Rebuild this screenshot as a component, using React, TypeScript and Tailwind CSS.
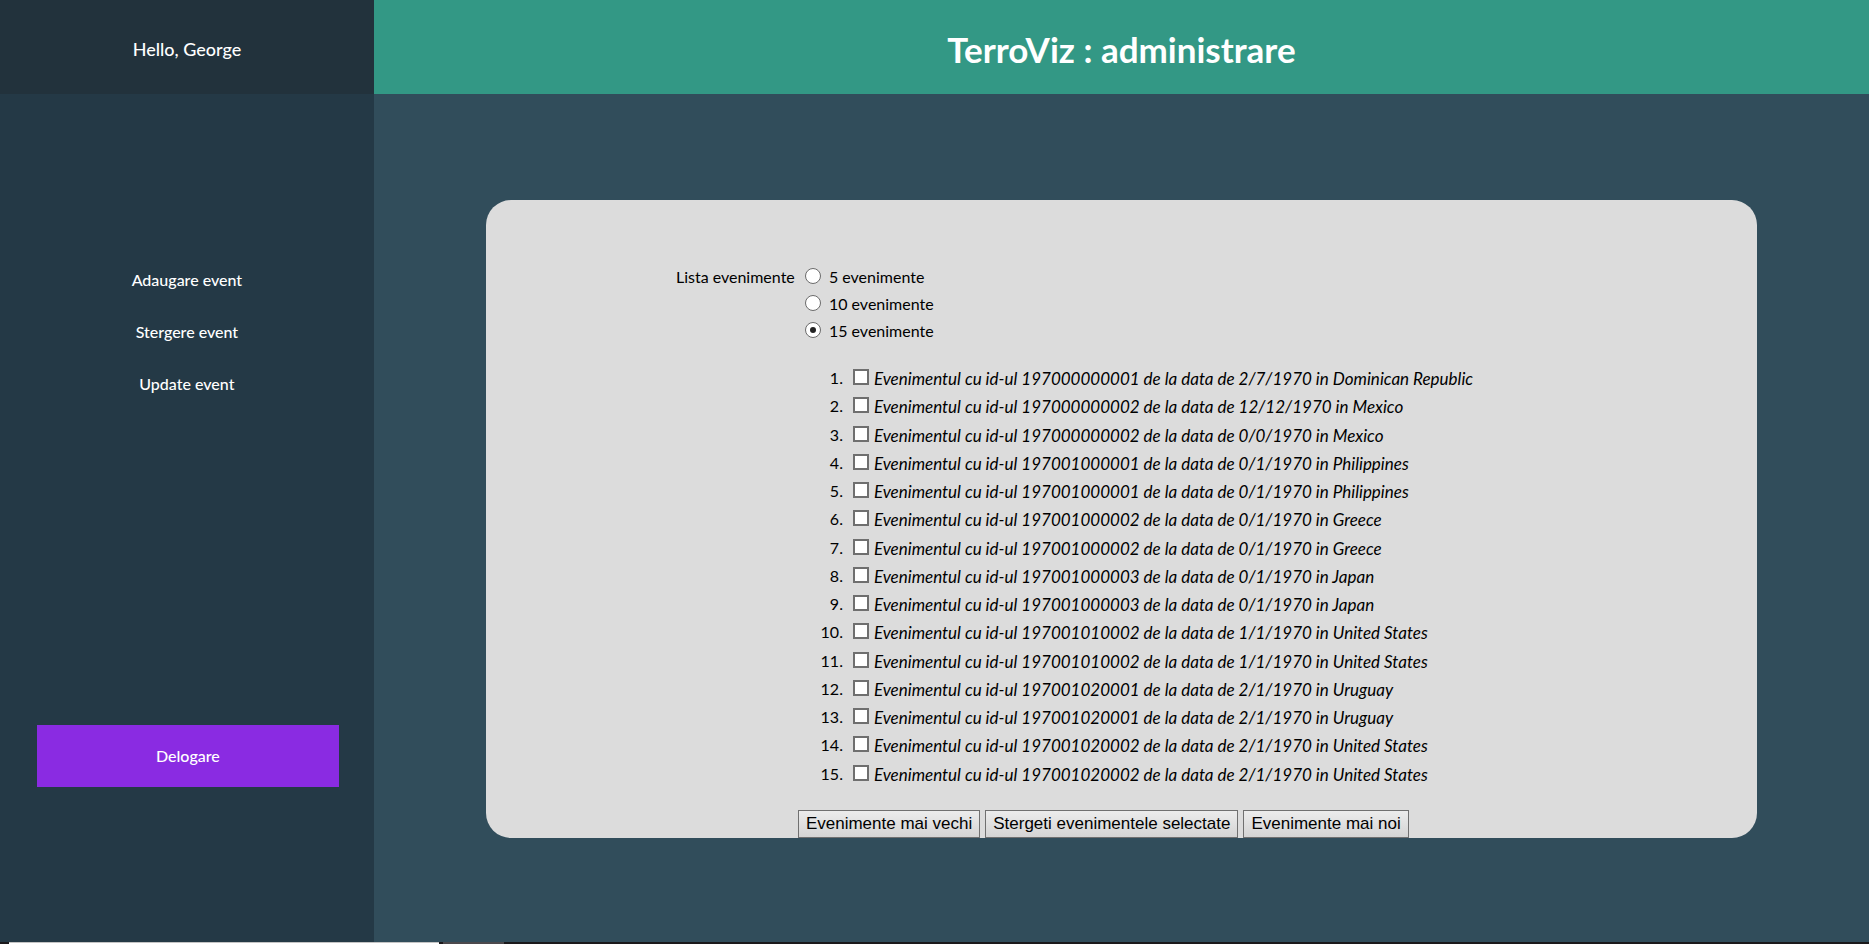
import { useState } from "react";

const links = ["Adaugare event", "Stergere event", "Update event"];
const sizes = [5, 10, 15];

const events = [
  { id: "197000000001", date: "2/7/1970", country: "Dominican Republic" },
  { id: "197000000002", date: "12/12/1970", country: "Mexico" },
  { id: "197000000002", date: "0/0/1970", country: "Mexico" },
  { id: "197001000001", date: "0/1/1970", country: "Philippines" },
  { id: "197001000001", date: "0/1/1970", country: "Philippines" },
  { id: "197001000002", date: "0/1/1970", country: "Greece" },
  { id: "197001000002", date: "0/1/1970", country: "Greece" },
  { id: "197001000003", date: "0/1/1970", country: "Japan" },
  { id: "197001000003", date: "0/1/1970", country: "Japan" },
  { id: "197001010002", date: "1/1/1970", country: "United States" },
  { id: "197001010002", date: "1/1/1970", country: "United States" },
  { id: "197001020001", date: "2/1/1970", country: "Uruguay" },
  { id: "197001020001", date: "2/1/1970", country: "Uruguay" },
  { id: "197001020002", date: "2/1/1970", country: "United States" },
  { id: "197001020002", date: "2/1/1970", country: "United States" },
];

function ActionButton({ children }: { children: string }) {
  return (
    <button
      type="button"
      className="h-7 border border-[#707070] bg-linear-to-b from-[#ececec] to-[#d4d4d4] px-[7px] font-['Liberation_Sans',Arial,sans-serif] text-[17px] leading-6 whitespace-nowrap text-black"
    >
      {children}
    </button>
  );
}

function Sidebar() {
  return (
    <aside className="flex w-1/5 shrink-0 flex-col bg-[#243946] text-center text-white">
      <div className="flex h-[94px] items-center justify-center bg-[#22323c] pt-1 text-lg font-medium">
        Hello, George
      </div>
      <nav className="mt-[172px] flex flex-col gap-6 text-base leading-7 font-medium">
        {links.map((link) => (
          <a key={link} href="#">
            {link}
          </a>
        ))}
      </nav>
      <a
        href="#"
        className="mt-auto mr-[35px] mb-[155px] ml-[37px] bg-[#8a2be2] py-[17px] text-base leading-7 font-medium"
      >
        Delogare
      </a>
    </aside>
  );
}

function EventPanel() {
  const [size, setSize] = useState(15);
  return (
    <form className="mx-[7.5%] mt-[106px] rounded-[25px] bg-[#dcdcdc] pt-[63px] pl-[190px] text-base leading-[27px] text-black">
      <div className="flex" role="radiogroup" aria-labelledby="list-size">
        <span id="list-size" className="w-[129px] shrink-0 whitespace-nowrap">
          Lista evenimente
        </span>
        <div>
          {sizes.map((n) => (
            <label key={n} className="flex gap-2">
              <input
                type="radio"
                name="size"
                value={n}
                checked={size === n}
                onChange={() => setSize(n)}
                className="mt-[5px] grid size-4 shrink-0 appearance-none place-items-center rounded-full border border-[#6b6b6b] bg-white before:size-1.5 before:rounded-full checked:before:bg-[#222222]"
              />
              {n} evenimente
            </label>
          ))}
        </div>
      </div>
      <ol className="mt-[21px] ml-[122px] grid min-h-[424px] auto-rows-fr leading-7">
        {events.map((event, i) => (
          <li key={i} className="flex">
            <span className="w-[45px] shrink-0 text-right leading-[26px]">{i + 1}.</span>
            <label className="ml-[10px] flex gap-[5px] text-[17px] whitespace-nowrap italic">
              <input
                type="checkbox"
                className="mt-1 size-4 shrink-0 appearance-none border-2 border-[#6f6f6f] bg-white checked:bg-[#0075ff]"
              />
              Evenimentul cu id-ul {event.id} de la data de {event.date} in {event.country}
            </label>
          </li>
        ))}
      </ol>
      <div className="mt-[21px] ml-[122px] flex gap-[5px]">
        <ActionButton>Evenimente mai vechi</ActionButton>
        <ActionButton>Stergeti evenimentele selectate</ActionButton>
        <ActionButton>Evenimente mai noi</ActionButton>
      </div>
    </form>
  );
}

export default function App() {
  return (
    <div className="flex min-h-screen flex-col font-[Lato,sans-serif]">
      <div className="flex flex-1">
        <Sidebar />
        <main className="min-w-0 flex-1 bg-[#314d5b]">
          <h1 className="flex h-[94px] items-center justify-center bg-[#339885] pt-1 text-[35px] font-bold text-white">
            TerroViz : administrare
          </h1>
          <EventPanel />
        </main>
      </div>
      <div className="flex h-[2px] bg-[#1b191b] pl-[9px]">
        <div className="w-[430px] border-t border-[#c4c4c4] bg-white" />
        <div className="ml-1 w-[61px] bg-[#4c494c]" />
      </div>
    </div>
  );
}
